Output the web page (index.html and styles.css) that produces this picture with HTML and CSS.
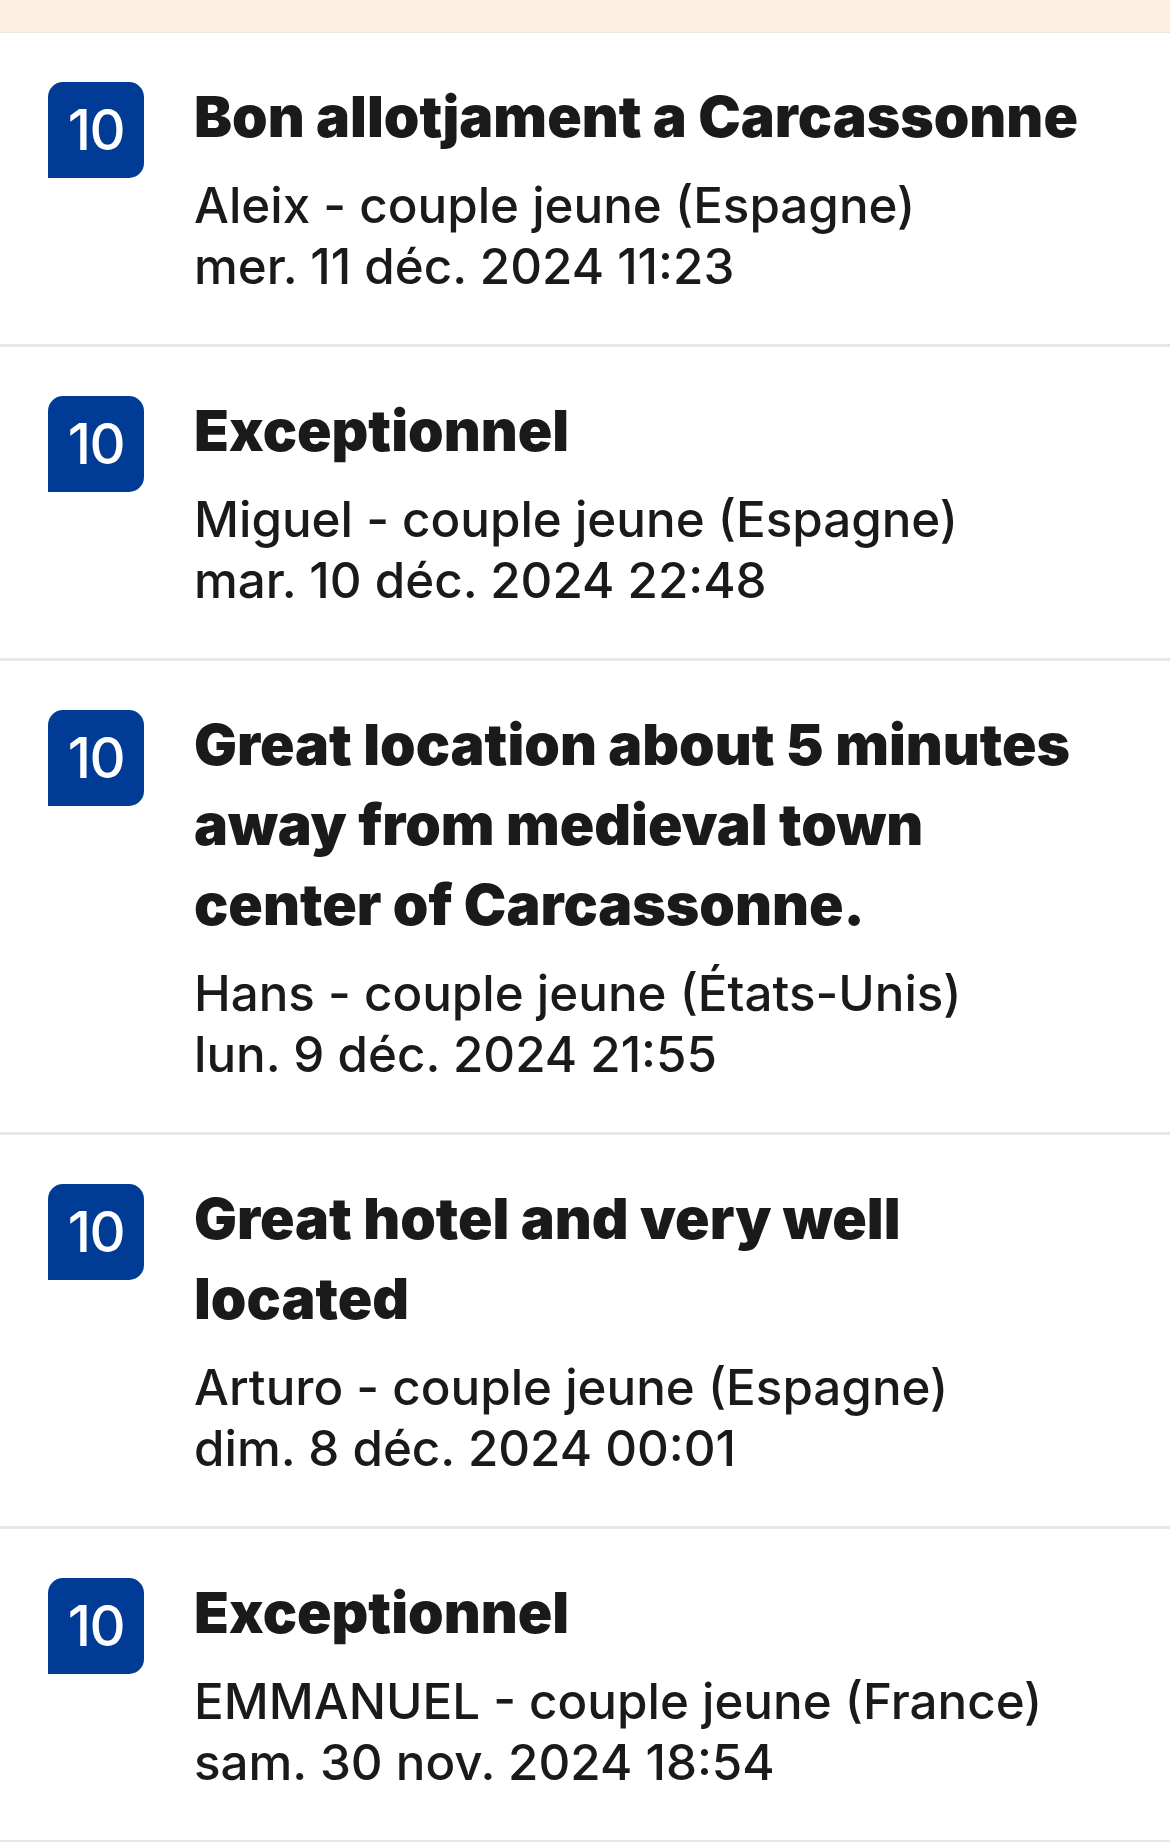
FILE: index.html
```html
<!DOCTYPE html>
<html lang="fr">
<head>
<meta charset="utf-8">
<title>Avis</title>
<link rel="stylesheet" href="styles.css">
</head>
<body>
<div class="banner"></div>
<ul class="reviews">
  <li class="review">
    <div class="score">10</div>
    <div class="body">
      <h3 class="title">Bon allotjament a Carcassonne</h3>
      <p class="meta">Aleix - couple jeune (Espagne)<br>mer. 11 déc. 2024 11:23</p>
    </div>
  </li>
  <li class="review">
    <div class="score">10</div>
    <div class="body">
      <h3 class="title">Exceptionnel</h3>
      <p class="meta">Miguel - couple jeune (Espagne)<br>mar. 10 déc. 2024 22:48</p>
    </div>
  </li>
  <li class="review">
    <div class="score">10</div>
    <div class="body">
      <h3 class="title">Great location about 5 minutes away from medieval town center of Carcassonne.</h3>
      <p class="meta">Hans - couple jeune (États-Unis)<br>lun. 9 déc. 2024 21:55</p>
    </div>
  </li>
  <li class="review">
    <div class="score">10</div>
    <div class="body">
      <h3 class="title">Great hotel and very well located</h3>
      <p class="meta">Arturo - couple jeune (Espagne)<br>dim. 8 déc. 2024 00:01</p>
    </div>
  </li>
  <li class="review">
    <div class="score">10</div>
    <div class="body">
      <h3 class="title">Exceptionnel</h3>
      <p class="meta">EMMANUEL - couple jeune (France)<br>sam. 30 nov. 2024 18:54</p>
    </div>
  </li>
</ul>
</body>
</html>
```
FILE: styles.css
```css
* { box-sizing: border-box; }
html, body { margin: 0; padding: 0; background: #ffffff; }
body { font-family: Inter, "Liberation Sans", sans-serif; color: #1a1a1a; width: 1170px; }
.banner { height: 33px; background: #fdf0e1; border-bottom: 1px solid #efe6dc; }
.reviews { list-style: none; margin: 0; padding: 0; }
.review {
  display: flex;
  align-items: flex-start;
  gap: 50px;
  padding: 44px 64px 47px 48px;
  border-bottom: 3px solid #e7e7e7;
}
.score {
  flex: none;
  width: 96px;
  height: 96px;
  margin-top: 5px;
  background: #003b95;
  color: #ffffff;
  border-radius: 15px 15px 15px 0;
  display: flex;
  align-items: center;
  justify-content: center;
  font-size: 56px;
  font-weight: 500;
  letter-spacing: -1.5px;
}
.body { flex: 1; min-width: 0; }
.title {
  margin: 0;
  font-size: 57px;
  line-height: 80px;
  font-weight: 900;
  letter-spacing: 0;
  color: #1a1a1a;
}
.meta {
  margin: 18px 0 0 0;
  font-size: 49.3px;
  line-height: 61px;
  font-weight: 450;
  color: #1a1a1a;
}
```
